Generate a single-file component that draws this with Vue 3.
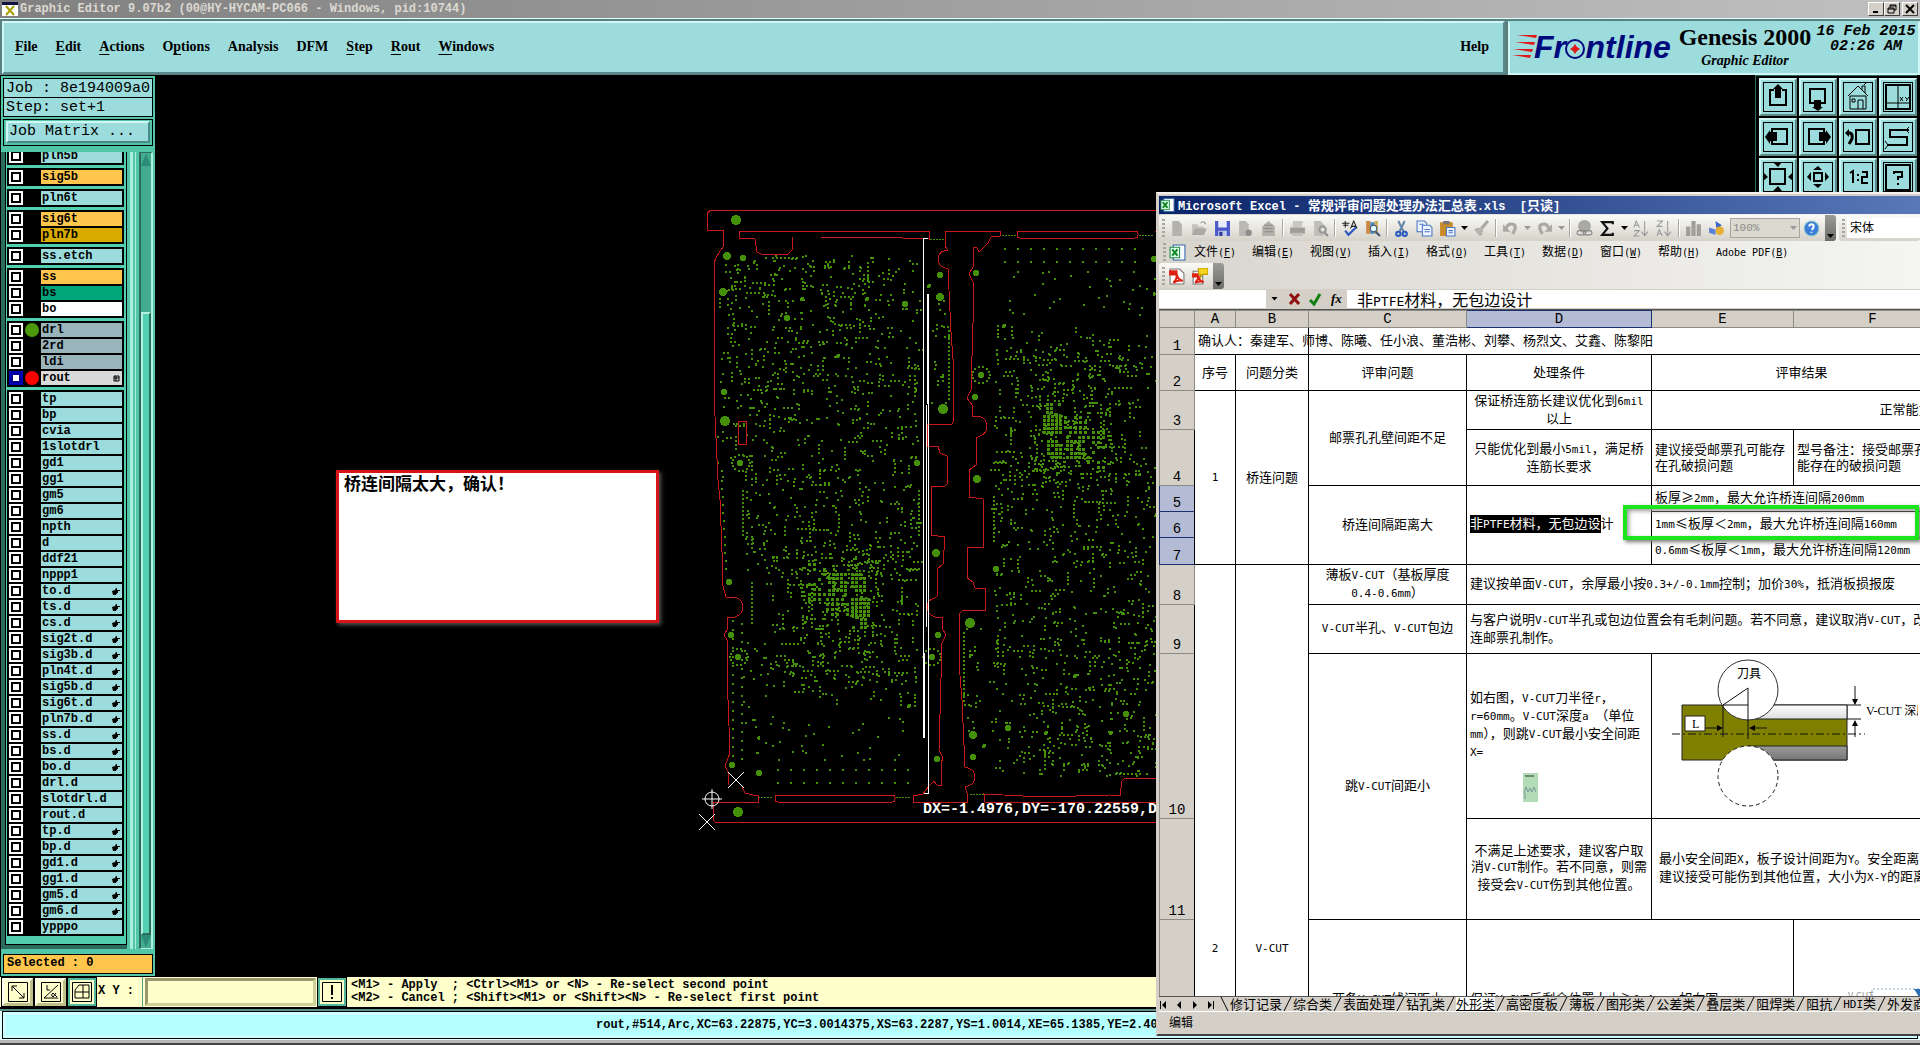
<script setup>
import { h } from 'vue'

// Mixed CJK / Latin text: Latin runs get half-width monospace glyphs.
const Txt = (props) =>
  h('span', { class: 'mix' },
    props.t.split(/([\x20-\x7e]+)/).filter(Boolean).map((s) =>
      /^[\x20-\x7e]/.test(s) ? h('span', { class: 'lat' }, s) : s))
Txt.props = ['t']

const menus = [['', 'F', 'ile'], ['', 'E', 'dit'], ['', 'A', 'ctions'], ['O', 'p', 'tions'], ['Anal', 'y', 'sis', 1], ['DFM', '', ''], ['', 'S', 'tep'], ['', 'R', 'out'], ['', 'W', 'indows']]

const L = (name, color = '', extra = {}) => ({ name, color, ...extra })
const hand = (s) => s.split(' ').map((n) => L(n, '', { hand: true }))
const plain = (s) => s.split(' ').map((n) => L(n))
const groups = [
  [L('pln5b')],
  [L('sig5b', 'orange')],
  [L('pln6t')],
  [L('sig6t', 'orange'), L('pln7b', 'gold')],
  [L('ss.etch')],
  [L('ss', 'orange'), L('bs', 'green'), L('bo', 'white')],
  [L('drl', 'slate', { dot: 'green' }), L('2rd', 'slate'), L('ldi', 'slate'), L('rout', 'grey', { dot: 'red', on: true })],
  [...plain('tp bp cvia 1slotdrl gd1 gg1 gm5 gm6 npth d ddf21 nppp1'),
    ...hand('to.d ts.d cs.d sig2t.d sig3b.d pln4t.d sig5b.d sig6t.d pln7b.d ss.d bs.d bo.d'),
    ...plain('drl.d slotdrl.d rout.d'), ...hand('tp.d bp.d gd1.d gg1.d gm5.d gm6.d'), L('ypppo')],
]

const tools = [
  ['Pan up', '<path d="M15 12h-4v15h16v-15h-4" class="k2"/><path d="M16 20v-9h-2l5-5 5 5h-2v9z"/>'],
  ['Pan down', '<path d="M15 25h-4v-14h15v14h-4" class="k2"/><path d="M15 22v7h-2l6 4 5-4h-2v-7z"/>'],
  ['Home', '<path d="M9 18L19 8l10 10M11 18v13h16v-13zM23 12v-4h3v7M13 21h3v3h-3zM19 31v-9h5v9" class="k1"/><path d="M25 7l2-2" class="k1"/>'],
  ['Windows', '<path d="M7 7h24v24h-24z" class="k2"/><path d="M19 7v24M7 25h24" class="k1"/><path d="M21 19l3 4M24 19l-3 4M26 19l2 2M30 19l-3 4" class="k1"/>'],
  ['Pan left', '<path d="M13 15v-4h15v15h-15v-4" class="k2"/><path d="M18 14v9h-7v3l-5-7 5-7v2z"/>'],
  ['Pan right', '<path d="M25 15v-4h-15v15h15v-4" class="k2"/><path d="M20 14v9h7v3l5-7-5-7v2z"/>'],
  ['Previous view', '<path d="M17 12h13v14h-13z" class="k2"/><path d="M8 15h3q3 1 2 6l-3 5" class="k3"/><path d="M10 11v8l-4-4z"/>'],
  ['Snake', '<path d="M30 12h-19v7h17v8h-20" class="k2"/><path d="M30 9l-3 3 3 3M6 23l3 4-3 4" class="k1"/>'],
  ['Zoom out', '<path d="M11 11h15v15h-15z" class="k2"/><path d="M14 4h9l-4 5zM14 33h9l-4-5zM4 14v9l5-4zM34 14v9l-5-4z"/>'],
  ['Zoom in', '<path d="M15 15h8v8h-8z" class="k2"/><path d="M14 12h9l-4-4zM14 26h9l-4 4zM12 14v9l-4-4zM26 14v9l4-4z"/>'],
  ['Scale one to two', '<path d="M11 15l3-2v12M18 17h2M18 22h2M23 14h5v5h-5v6h6" class="k2"/>'],
  ['Help', '<path d="M7 7h24v25h-24z" class="k2"/><path d="M15 16v-2h8v5h-4v3M19 25v2" class="k2"/>'],
]

const xl = {
  new: '<path d="M4 1h6l3 3v11h-9z" fill="#b4b2ac"/>',
  open: '<path d="M1 14V4h5l1 2h5v3" fill="#c4c1b8"/><path d="M1 14l3-6h11l-3 6z" fill="#aaa8a2"/><path d="M9 3q3-3 5 1" fill="none" stroke="#999"/>',
  save: '<path d="M1 1h14v14h-14z" fill="#4a58c8"/><path d="M4 1h8v6h-8z" fill="#e8ecff"/><path d="M4 10h8v5h-8z" fill="#c6ccf0"/><path d="M5 11h3v4h-3z" fill="#303c90"/>',
  perm: '<path d="M2 1h6l3 3v11h-9z" fill="#bab8b2"/><circle cx="11" cy="12" r="3" fill="#8f8d88"/>',
  mail: '<path d="M2 6l6-5 6 5v9h-12z" fill="#b3b0a9"/><path d="M4 5h8M4 8h8M4 11h8" stroke="#888"/>',
  print: '<path d="M4 1h9l-1 6h-9z" fill="#c9c7c1"/><path d="M1 7h14v6h-14z" fill="#9f9d98"/><path d="M3 12h10v3h-10z" fill="#c2c0ba"/>',
  view: '<path d="M2 1h6l3 3v11h-9z" fill="#c0beb8"/><circle cx="10" cy="9" r="3" fill="#ddd" stroke="#999" stroke-width="2"/><path d="M12 12l3 3" stroke="#888" stroke-width="2"/>',
  spell: '<path d="M1 3h7M4 1v6M2 5h5M9 8l3-7 3 7M10 6h4" stroke="#222" fill="none"/><path d="M4 10l3 4 7-7" stroke="#2b5bc0" stroke-width="2" fill="none"/>',
  book: '<path d="M2 1h4v12h-4z" fill="#c84"/><path d="M6 2h4v11h-4z" fill="#48b"/><path d="M10 1h3v12h-3z" fill="#ca5"/><circle cx="9" cy="8" r="3" fill="#dff" stroke="#457"/><path d="M11 11l4 4" stroke="#457" stroke-width="2"/>',
  cut: '<path d="M5 1l5 10M11 1l-5 10" stroke="#6688aa" stroke-width="2"/><circle cx="5" cy="13" r="2" fill="none" stroke="#2b5bc0" stroke-width="2"/><circle cx="11" cy="13" r="2" fill="none" stroke="#2b5bc0" stroke-width="2"/>',
  copy: '<path d="M1 1h7l2 2v8h-9z" fill="#eef3ff" stroke="#4a78c0"/><path d="M6 5h7l2 2v8h-9z" fill="#eef3ff" stroke="#4a78c0"/><path d="M8 9h5M8 11h5M3 4h4" stroke="#4a78c0"/>',
  paste: '<path d="M1 2h12v13h-12z" fill="#c98a28"/><path d="M4 1h6v3h-6z" fill="#777"/><path d="M7 7h8v8h-8z" fill="#eef3ff" stroke="#4a78c0"/><path d="M9 10h4M9 12h4" stroke="#4a78c0"/>',
  brush: '<path d="M14 1l-6 7M3 8l5 6" stroke="#aaa8a2" stroke-width="3"/><path d="M1 9l6-2 3 3-4 5z" fill="#b5b3ad"/>',
  undo: '<path d="M4 8q1-5 6-4t0 9" stroke="#aaa8a2" stroke-width="3" fill="none"/><path d="M1 4v7h7z" fill="#aaa8a2"/>',
  redo: '<path d="M12 8q-1-5-6-4t0 9" stroke="#aaa8a2" stroke-width="3" fill="none"/><path d="M15 4v7h-7z" fill="#aaa8a2"/>',
  link: '<circle cx="8" cy="6" r="6" fill="#aaa8a2"/><rect x="1" y="10" width="8" height="4" rx="2" fill="none" stroke="#888"/><rect x="7" y="10" width="8" height="4" rx="2" fill="none" stroke="#888"/>',
  sum: '<path d="M13 4v-2h-10l5 6-5 6h10v-2" fill="none" stroke="#111" stroke-width="2"/>',
  az: '<path d="M1 7l2-6 3 6M2 5h3M1 10h5l-5 5h5" fill="none" stroke="#999"/><path d="M11 1v13M8 11l3 4 3-4" fill="none" stroke="#999"/>',
  za: '<path d="M1 15l2-6 3 6M2 13h3M1 1h5l-5 5h5" fill="none" stroke="#999"/><path d="M11 1v13M8 11l3 4 3-4" fill="none" stroke="#999"/>',
  chart: '<path d="M1 6h4v9h-4zM6 1h4v14h-4zM11 4h4v11h-4z" fill="#a09e99"/>',
  draw: '<path d="M7 1l6 4-5 4z" fill="#3b66c8"/><circle cx="11" cy="10" r="4" fill="#e8b030"/><path d="M1 7l6 2v5l-6-2z" fill="#5a82d8"/>',
  help: '<circle cx="8" cy="8" r="7" fill="#3a7ed8" stroke="#9cc"/><path d="M6 6q0-2 2-2t2 2-2 3M8 11v1" fill="none" stroke="#fff" stroke-width="2"/>',
  pdf: '<path d="M2 1h9l4 4v10h-13z" fill="#fff" stroke="#777"/><path d="M1 2h8v5h-8z" fill="#d21"/><path d="M5 14q4-4 3-8 2 6 6 6-5-1-9 2z" fill="none" stroke="#d21" stroke-width="2"/>',
  pdf2: '<path d="M2 3h9v12h-9z" fill="#fff" stroke="#777"/><path d="M1 5h7v4h-7z" fill="#d21"/><path d="M4 14q3-3 3-6 1 5 5 5-4-1-8 1z" fill="none" stroke="#d21" stroke-width="2"/><path d="M7 0h9v6h-5l-2 3v-3h-2z" fill="#f5d31c" stroke="#b90"/>',
  sheet: '<path d="M4 1h11v14h-11z" fill="#fff" stroke="#36a"/><path d="M1 3h9v10h-9z" fill="#dfe" stroke="#284"/><path d="M3 5l5 6M8 5l-5 6" stroke="#182" stroke-width="2"/>',
}
const bar = ['new', 'open', 'save', 'perm', 'mail', '|', 'print', 'view', '|', 'spell', 'book', '|', 'cut', 'copy', 'paste', 'v', 'brush', '|', 'undo', 'w', 'redo', 'w', '|', 'link', 'sum', 'v', 'az', 'za', '|', 'chart', 'draw']
const xmenus = [['文件', 'F'], ['编辑', 'E'], ['视图', 'V'], ['插入', 'I'], ['格式', 'O'], ['工具', 'T'], ['数据', 'D'], ['窗口', 'W'], ['帮助', 'H'], ['Adobe PDF', 'B']]
const tabs = ['修订记录', '综合类', '表面处理', '钻孔类', '外形类', '高密度板', '薄板', '图形类', '公差类', '叠层类', '阻焊类', '阻抗', 'HDI类', '外发商']

// c: text, k: class, cs / rs: spans
const rows = [
  { n: 1, h: 27, cells: [{ c: '确认人：秦建军、师博、陈曦、任小浪、董浩彬、刘攀、杨烈文、艾鑫、陈黎阳', cs: 2, k: 'l spill' }, { c: '', cs: 5 }] },
  { n: 2, h: 36, cells: [{ c: '序号' }, { c: '问题分类' }, { c: '评审问题' }, { c: '处理条件' }, { c: '评审结果', cs: 2 }, { c: '' }] },
  { n: 3, h: 39, cells: [{ c: '1', rs: 5 }, { c: '桥连问题', rs: 5 }, { c: '邮票孔孔壁间距不足', rs: 2 }, { c: '保证桥连筋长建议优化到6mil\n以上' }, { c: '正常能力', cs: 3 }] },
  { n: 4, h: 56, cells: [{ c: '只能优化到最小5mil，满足桥\n连筋长要求' }, { c: '建议接受邮票孔可能存\n在孔破损问题', k: 'l' }, { c: '型号备注：接受邮票孔可\n能存在的破损问题', k: 'l', cs: 2 }] },
  { n: 5, h: 26, sel: 1, cells: [{ c: '桥连间隔距离大', rs: 3 }, { edit: 1, rs: 3, k: 'l active' }, { c: '板厚≥2mm，最大允许桥连间隔200mm', k: 'l', cs: 3 }] },
  { n: 6, h: 26, sel: 1, cells: [{ c: '1mm≤板厚＜2mm，最大允许桥连间隔160mm', k: 'l', cs: 3 }] },
  { n: 7, h: 27, sel: 1, cells: [{ c: '0.6mm≤板厚＜1mm，最大允许桥连间隔120mm', k: 'l', cs: 3 }] },
  { n: 8, h: 40, cells: [{ c: '2', rs: 6 }, { c: 'V-CUT', rs: 6 }, { c: '薄板V-CUT（基板厚度\n0.4-0.6mm）' }, { c: '建议按单面V-CUT，余厚最小按0.3+/-0.1mm控制；加价30%，抵消板损报废', k: 'l', cs: 4 }] },
  { n: 9, h: 49, cells: [{ c: 'V-CUT半孔、V-CUT包边' }, { c: '与客户说明V-CUT半孔或包边位置会有毛刺问题。若不同意，建议取消V-CUT，改\n连邮票孔制作。', k: 'l', cs: 4 }] },
  { n: 10, h: 165, cells: [{ c: '跳V-CUT间距小', rs: 2 }, { c: '如右图，V-CUT刀半径r，\nr=60mm。V-CUT深度a （单位\nmm），则跳V-CUT最小安全间距\nX=', k: 'l', formula: 1 }, { fig: 1, cs: 3, k: 'fig' }] },
  { n: 11, h: 101, cells: [{ c: '不满足上述要求，建议客户取\n消V-CUT制作。若不同意，则需\n接受会V-CUT伤到其他位置。' }, { c: '最小安全间距X，板子设计间距为Y。安全距离不足，\n建议接受可能伤到其他位置，大小为X-Y的距离', k: 'l far', cs: 3 }] },
  { n: 12, h: 160, cells: [{ c: '两条V-CUT线间距小' }, { c: '保证V-CUT后剩余位置大小≥0.4mm，如右图', k: 'l', cs: 2 }, { fig2: 1, cs: 2, k: 'fig' }] },
  { n: 13, h: 254, cells: [{ c: '' }, { c: '', cs: 4 }] },
]

// Drill hits of one board; the second board is the same one turned by 180 degrees.
let seed = 20150216
const rnd = () => ((seed = (seed * 1664525 + 1013904223) >>> 0) / 4294967296)
const dots = []
const dot = (x, y, w = 2, hh = 2) => dots.push([Math.round(x), Math.round(y), w, hh])
const scatter = (n, x0, y0, x1, y1, run = 0.25) => {
  for (let i = 0; i < n; i++) {
    let x = x0 + rnd() * (x1 - x0)
    let y = y0 + rnd() * (y1 - y0)
    dot(x, y)
    const vert = rnd() < 0.5
    while (rnd() < run) {
      if (vert) y += 4
      else x += 4
      dot(x, y)
    }
  }
}
scatter(340, 725, 254, 920, 375)
scatter(200, 735, 375, 918, 460)
scatter(250, 745, 460, 918, 570)
scatter(230, 765, 545, 918, 685, 0.35)
scatter(90, 800, 555, 885, 660, 0.4)
scatter(50, 765, 660, 918, 700)
scatter(34, 765, 705, 905, 760, 0)
scatter(26, 716, 262, 735, 480)
scatter(20, 931, 300, 945, 415)
scatter(24, 742, 640, 765, 770, 0)
const block = (x0, y0, x1, y1, s, p) => {
  for (let y = y0; y < y1; y += s) for (let x = x0; x < x1; x += s) if (rnd() < p) dot(x, y, 3, 3)
}
block(828, 573, 848, 596, 4, 0.85)
block(851, 573, 867, 590, 4, 0.8)
block(851, 598, 871, 618, 4, 0.95)
block(808, 563, 826, 600, 5, 0.6)
block(852, 618, 870, 630, 4, 0.5)
block(826, 598, 850, 616, 5, 0.5)
for (let x = 777; x < 910; x += 13) { dot(x, 769); dot(x, 782) }
for (let y = 582; y < 625; y += 4) dot(751, y)
for (let y = 490; y < 536; y += 4) { dot(742, y); dot(918, y) }
for (let y = 330; y < 400; y += 4) if (y % 12) dot(948, y)
for (let y = 480; y < 572; y += 8) dot(721 + (y - 480) / 22, y)
for (let y = 620; y < 760; y += 9) { dot(732, y); dot(741, y + 3) }
for (let x = 772; x < 800; x += 4) dot(x, 257)
const ring = (cx, cy) => {
  for (let a = 0; a < 14; a++) dot(cx + 9 * Math.cos(a * 0.449), cy + 8 * Math.sin(a * 0.449))
}
ring(740, 462); ring(738, 656); ring(931, 656)
const pads = [[727, 256, 4], [743, 258, 3], [723, 292, 4], [787, 318, 3], [905, 304, 3], [802, 299, 2], [867, 299, 2], [940, 275, 3], [929, 286, 2], [940, 297, 4], [725, 421, 5], [724, 392, 3], [740, 463, 3], [917, 463, 3], [943, 409, 5], [838, 356, 2], [729, 582, 3], [731, 635, 3], [738, 657, 3], [932, 657, 3], [936, 553, 4], [938, 635, 3], [732, 765, 3], [759, 773, 3], [909, 706, 2], [937, 759, 3]]
const rect = ([x, y, w, q]) => `M${x} ${y}h${w}v${q}h-${w}z`
const near = dots.map(rect).join('')
const far = dots.map(([x, y, w, q]) => rect([1913 - x - w, 1032 - y - q, w, q])).join('')
const links = [[1002, 235], [1139, 235], [930, 239], [758, 797], [896, 797], [970, 794]]
  .map(([x, y]) => [0, 3, 6, 9, 12].map((d) => rect([x + d, y, 2, 1])).join('')).join('')
</script>

<template>
  <div class="screen">
    <header class="titlebar">
      <svg class="xicon" viewBox="0 0 16 14" aria-hidden="true"><path d="M0 0h16v14H0z" fill="#fff" /><path d="M0 0h16v3H0z" fill="#114" /><path d="M4 4l8 9M12 4l-8 9" stroke="#a8a000" stroke-width="2" /></svg>
      <span class="wtitle">Graphic Editor 9.07b2 (00@HY-HYCAM-PC066 - Windows, pid:10744)</span>
      <div class="wbtns">
        <button aria-label="Minimize"><svg viewBox="0 0 12 10"><path d="M3 8h5" class="k2" /></svg></button>
        <button aria-label="Restore"><svg viewBox="0 0 12 10"><path d="M4 4v-3h6v5h-2M2 4h6v5h-6zM2 5h6M4 2h6" class="k1" /></svg></button>
        <button class="close" aria-label="Close"><svg viewBox="0 0 12 10"><path d="M2 1l8 8M10 1l-8 8" class="k2" /></svg></button>
      </div>
    </header>

    <div class="head">
      <nav class="menubar">
        <a v-for="m in menus" :key="m.join('')" href="#">{{ m[0] }}<u v-if="!m[3]">{{ m[1] }}</u><template v-else>{{ m[1] }}</template>{{ m[2] }}</a>
        <a href="#" class="helplink">Help</a>
      </nav>
      <div class="brand">
        <svg class="logo" viewBox="0 0 164 40" role="img" aria-label="Frontline">
          <path d="M5 8h20l-1 3zM3 15h20l-1 3zM1 22h20l-1 3zM0 28h19l-1 3z" fill="#e01818" />
          <text x="22" y="31">Fr<tspan fill="none">o</tspan>ntline</text>
          <circle cx="63" cy="22" r="9" fill="none" stroke="#000a7c" stroke-width="2" />
          <path d="M63 17l2 3 3 2-3 2-2 3-2-3-3-2 3-2z" fill="#e01818" />
        </svg>
        <div class="product"><strong>Genesis 2000</strong><em>Graphic Editor</em></div>
        <div class="clock">16 Feb 2015<br>02:26 AM</div>
      </div>
    </div>

    <main class="work">
      <aside class="side">
        <div class="jobbox">Job : 8e194009a0</div>
        <div class="jobbox">Step: set+1</div>
        <div class="matrix"><button>Job Matrix ...</button></div>
        <div class="listwrap">
          <div class="list">
            <div v-for="(g, gi) in groups" :key="gi" class="group">
              <label v-for="r in g" :key="r.name" class="row">
                <input type="checkbox" :class="{ on: r.on }">
                <i class="mark" :class="r.dot"></i>
                <span class="name" :class="r.color">{{ r.name }}
                  <svg v-if="r.hand" viewBox="0 0 8 7" aria-hidden="true"><path d="M0 3l3-1 1-2h1v2h3v1h-2v2h-1v1h-1v1h-3z" /></svg>
                  <svg v-if="r.on" viewBox="0 0 8 7" aria-hidden="true"><path d="M2 1h5v5h-5zM4 1v5M2 3h5" class="k1" /></svg>
                </span>
              </label>
            </div>
          </div>
          <div class="rail"></div>
          <div class="scroll"><i class="up"></i><i class="track"></i><i class="thumb"></i><i class="down"></i></div>
        </div>
        <div class="selected">Selected : 0</div>
      </aside>

      <svg class="board" viewBox="690 200 470 640" shape-rendering="crispEdges" aria-label="Board artwork">
        <g fill="#459009">
          <path :d="near" /><path :d="far" /><path :d="links" />
          <circle v-for="p in pads" :key="'a' + p" :cx="p[0]" :cy="p[1]" :r="p[2]" />
          <circle v-for="p in pads" :key="'b' + p" :cx="1913 - p[0]" :cy="1032 - p[1]" :r="p[2]" />
          <circle cx="736" cy="220" r="5" /><circle cx="738" cy="812" r="5" />
        </g>
        <g fill="none" stroke="#c81818">
          <path d="M1160 210.500H710l-3 3V230h16l1 16q-10 12-10 20V395l4 85 2 20 3 77-1 5 4 15h9q8 3 8 10t-8 10h-8v13l-3 5 3 5v33l3 80-5 13 3 6v13M742 787l3 6 8 2h5v7h-45v18l2 2H1160" />
          <path d="M739 231h190v8l-26-1-83-1h-27l-1 13-4 4h-27l-4-2-2-13-16-1z" />
          <path d="M945 231h55v5l-9 1-3 6-6 6-3 3-2-4-4-1v20l-4 7 4 8v41l-2 67-4 8 5 7v11h6q9 2 9 10t-7 10l-4 2v27l-7 5v27l14 2v48h-16v31l6 4 2 6h10v22h-22l-4 4v49l3 37 3 67q10 2 10 10t-10 10l2 6v9h-54v-6l10-2 5-7 6-6 3 4h4v-22l2-5-4-8 3-107 4-8-4-7 1-11h-8q-8-3-8-10t8-9l2-2v-27l6-5 2-27-14-2v-49h14l2-2v-28l-7-3-2-7h-11v-22h25l1-2v-63l-2-27-3-63q-10-2-10-10t10-9l-3-4z" />
          <rect x="1017" y="231" width="121" height="7" rx="3" /><rect x="775" y="795" width="120" height="7" rx="3" /><rect x="738" y="421" width="8" height="23" />
          <path d="M1160 802H985l-1-8 58 3 68-2 10 1 2-15 3-3h35M1155 231h5" />
        </g>
        <path d="M928 238h-4.500V738M928.500 294V793h-5M926.500 405V627" fill="none" stroke="#fff" />
        <path d="M928 294v110M924 653v85" stroke="#fff" stroke-width="2" />
        <g fill="none" stroke="#fff" shape-rendering="auto"><circle cx="712" cy="799" r="7" /><path d="M702 799h20M712 789v20M728 772l16 16M744 772l-16 16M699 814l16 16M715 814l-16 16" /></g>
        <text x="923" y="813">DX=-1.4976,DY=-170.22559,D</text>
      </svg>

      <div class="note">桥连间隔太大，确认！</div>

      <div class="tools">
        <button v-for="t in tools" :key="t[0]" :aria-label="t[0]"><svg viewBox="0 0 38 38" v-html="t[1]"></svg></button>
      </div>
    </main>

    <div class="cmd">
      <button aria-label="Diagonal"><svg viewBox="0 0 20 20"><path d="M.5.5h19v19H.5zM4 4l12 12M4 9V4h5M11 16h5v-5" class="k1" /></svg></button>
      <button aria-label="Angle"><svg viewBox="0 0 20 20"><path d="M.5.5h19v19H.5zM17 3L3 16h14M6 3v5h3M12 11q-3 2 0 4l3-4M12 11l4 4" class="k1" /></svg></button>
      <button class="lit" aria-label="Grid"><svg viewBox="0 0 20 20"><path d="M.5.5h19v19H.5zM7 3h10v13H3V8zM3 10h14M11 3v13" class="k1" /></svg></button>
      <label for="xy">X Y :</label>
      <input id="xy" type="text">
      <button class="lit bang" aria-label="Alert"><svg viewBox="0 0 20 20"><path d="M.5.5h19v19H.5z" class="k1" /><path d="M10 3v10M10 15v2" class="k2" /></svg></button>
      <p>&lt;M1&gt; - Apply&nbsp; ; &lt;Ctrl&gt;&lt;M1&gt; or &lt;N&gt; - Re-select second point<br>&lt;M2&gt; - Cancel ; &lt;Shift&gt;&lt;M1&gt; or &lt;Shift&gt;&lt;N&gt; - Re-select first point</p>
    </div>
    <footer class="status"><div>rout,#514,Arc,XC=63.22875,YC=3.0014375,XS=63.2287,YS=1.0014,XE=65.1385,YE=2.4073</div></footer>

    <section class="excel">
      <div class="xtitle"><svg viewBox="0 0 16 16" v-html="xl.sheet"></svg><Txt t="Microsoft Excel - 常规评审问题处理办法汇总表.xls  [只读]" /></div>
      <div class="dock">
        <div class="bars">
          <div class="bar">
            <i class="grip"></i>
            <template v-for="(b, i) in bar" :key="i">
              <i v-if="b === '|'" class="sep"></i>
              <i v-else-if="b === 'v' || b === 'w'" class="drop" :class="{ dim: b === 'w' }"></i>
              <button v-else :aria-label="b"><svg viewBox="0 0 16 16" v-html="xl[b]"></svg></button>
            </template>
            <div class="zoom">100%<i class="drop dim"></i></div>
            <button aria-label="help"><svg viewBox="0 0 16 16" v-html="xl.help"></svg></button>
            <i class="cap"></i>
          </div>
          <div class="bar rest"><i class="grip"></i><div class="font">宋体</div></div>
        </div>
        <nav class="xmenu">
          <i class="grip"></i><svg viewBox="0 0 16 16" v-html="xl.sheet"></svg>
          <a v-for="m in xmenus" :key="m[1]" href="#"><Txt :t="m[0]" /><span class="lat">(<u>{{ m[1] }}</u>)</span></a>
        </nav>
        <div class="bars">
          <div class="bar"><i class="grip"></i><button aria-label="pdf"><svg viewBox="0 0 16 16" v-html="xl.pdf"></svg></button><button aria-label="pdf mail"><svg viewBox="0 0 16 16" v-html="xl.pdf2"></svg></button><i class="cap"></i></div>
        </div>
      </div>
      <div class="fx">
        <input aria-label="Name box" type="text">
        <i class="drop"></i>
        <svg class="ops" viewBox="0 0 62 18" aria-hidden="true"><path d="M6 4l9 10M15 4l-9 10" stroke="#901010" stroke-width="3" /><path d="M26 10l4 4 6-10" fill="none" stroke="#108010" stroke-width="3" /><text x="47" y="13">fx</text></svg>
        <div class="ftext"><Txt t="非PTFE材料，无包边设计" /></div>
      </div>
      <div class="sheet">
        <table>
          <colgroup><col class="c0"><col class="ca"><col class="cb"><col class="cc"><col class="cd"><col class="ce"><col class="cf"><col class="cg"></colgroup>
          <thead><tr><th></th><th v-for="c in 'ABCDEFG'" :key="c" :class="{ hot: c === 'D' }">{{ c }}</th></tr></thead>
          <tbody>
            <tr v-for="r in rows" :key="r.n" :style="{ height: r.h + 'px' }">
              <th :class="{ hot: r.sel }">{{ r.n > 11 ? '' : r.n }}</th>
              <td v-for="(c, i) in r.cells" :key="i" :class="c.k" :colspan="c.cs" :rowspan="c.rs">
                <template v-if="c.edit"><span class="inv"><Txt t="非PTFE材料，无包边设" /></span>计</template>
                <svg v-else-if="c.fig" class="vcut" viewBox="1653 655 266 163">
                  <defs><linearGradient id="g1" x2="0" y2="1"><stop offset="0" stop-color="#fff" /><stop offset="1" stop-color="#777" /></linearGradient></defs>
                  <path d="M1683 706h165v55h-165z" fill="#808000" stroke="#222" />
                  <path d="M1749 706h99v14h-99zM1749 747h99v14h-99z" fill="url(#g1)" stroke="#222" />
                  <circle cx="1749" cy="691" r="30" fill="#fff" stroke="#333" />
                  <circle cx="1749" cy="777" r="30" fill="#fff" stroke="#222" stroke-dasharray="4 3" />
                  <path d="M1724 738v-32l25-17v51M1724 706h25M1848 706h14M1848 720h14M1856 687v16M1856 738v-14M1706 729h14M1768 729h-14" fill="none" stroke="#111" />
                  <path d="M1853 700h6l-3 6zM1853 727h6l-3-6zM1718 726v6l6-3zM1756 726v6l-6-3z" />
                  <path d="M1673 735h193" stroke="#111" stroke-dasharray="8 3 2 3" />
                  <path d="M1686 717h20v15h-20z" fill="#fff" stroke="#222" />
                  <text x="1693" y="729">L</text><text x="1738" y="679">刀具</text><text x="1867" y="716">V-CUT 深度</text>
                </svg>
                <svg v-else-if="c.fig2" class="tri" viewBox="0 0 90 14"><text x="0" y="13">V-CUT</text><path d="M24 14V3h50" fill="none" stroke="#8ab" stroke-dasharray="2 2" /><path d="M66 3h24v11h-17z" fill="#2f6fb5" /></svg>
                <template v-else>
                  <Txt :t="c.c" />
                  <svg v-if="c.formula" class="eq" viewBox="0 0 15 29"><path d="M0 0h15v29H0z" fill="#b2dcb6" /><path d="M2 3h9" stroke="#333" /><path d="M1 20l2-6 2 5 2-4 2 4 2-5 2 5M2 20v6" fill="none" stroke="#799" /></svg>
                </template>
              </td>
            </tr>
          </tbody>
        </table>
        <div class="callout"></div>
      </div>
      <div class="tabs">
        <svg class="nav" viewBox="0 0 60 15" aria-hidden="true"><path d="M3 8l4-4v8zM18 8l4-4v8zM38 8l-4-4v8zM53 8l-4-4v8z" /><path d="M1 4h1v8h-1zM54 4h1v8h-1z" /></svg>
        <a v-for="(t, i) in tabs" :key="t" href="#" :class="{ cur: i === 4 }"><svg viewBox="0 0 11 15" aria-hidden="true"><path :d="i === 0 ? 'M2 0l7 14' : 'M2 14l7-14'" class="k1" /></svg><Txt :t="t" /></a>
      </div>
      <div class="xstatus">编辑</div>
    </section>
  </div>
</template>

<style>
body { margin: 0; background: #000; }
.mix { white-space: pre; }
.lat { font-family: "DejaVu Sans Mono", monospace; font-size: 11px; }
.k1, .k2, .k3 { fill: none; stroke: #000; stroke-width: 1; }
.k2 { stroke-width: 2; }
.k3 { stroke-width: 3; }
</style>

<style scoped>
* { box-sizing: border-box; }
.screen { position: relative; display: flex; flex-direction: column; height: 100vh; overflow: hidden; background: #000; color: #000; font-family: "Liberation Mono", monospace; }
button { padding: 0; border: 0; background: none; font: inherit; color: inherit; display: grid; place-items: center; }
a { color: inherit; text-decoration: none; }
svg { display: block; }

.titlebar { display: flex; align-items: center; height: 18px; padding: 0 2px; gap: 2px; background: linear-gradient(90deg, #808080, #c0c0c0); color: #dcd9d2; }
.xicon { width: 16px; height: 14px; }
.wtitle { flex: 1; font-size: 12px; font-weight: bold; }
.wbtns { display: flex; }
.wbtns button { width: 16px; height: 14px; background: #d4d0c8; border: 1px solid; border-color: #fff #404040 #404040 #fff; }
.wbtns svg { width: 12px; height: 10px; }
.wbtns .close { margin-left: 2px; }

.head { display: flex; height: 57px; gap: 1px; border-top: 1px solid #dff; background: #5a8080; padding-top: 2px; }
.menubar, .brand { background: #9cdcdc; border: 2px solid; border-color: #d0f6f6 #5a8a8a #5a8a8a #d0f6f6; }
.menubar { flex: 1; margin: 0 0 1px 2px; display: flex; align-items: center; gap: 18px; padding: 0 14px 1px 11px; font: bold 14px "Liberation Serif", serif; }
.menubar u { text-underline-offset: 3px; }
.helplink { margin-left: auto; }
.brand { width: 412px; margin-left: 2px; display: flex; padding: 0 0 0 2px; border-color: #9cdcdc #d0f6f6 #d0f6f6 #d0f6f6; }
.logo { width: 164px; height: 40px; margin-top: 4px; }
.logo text { font: italic bold 32px "Liberation Sans", sans-serif; fill: #000a7c; }
.product { width: 138px; display: flex; flex-direction: column; align-items: center; font-family: "Liberation Serif", serif; white-space: nowrap; }
.product strong { font-size: 24px; line-height: 28px; }
.product em { font-size: 14px; font-weight: bold; line-height: 20px; }
.clock { flex: 1; text-align: center; font-style: italic; font-weight: bold; font-size: 15px; line-height: 15px; padding-top: 1px; white-space: nowrap; }

.work { position: relative; flex: 1; min-height: 0; display: flex; justify-content: space-between; }
.side { width: 154px; margin: 1px 0 0 1px; padding: 2px; display: flex; flex-direction: column; background: #52c6a6; }
.jobbox { height: 20px; margin-bottom: -1px; border: 1px solid #000; background: #9cdcdc; font-size: 15px; line-height: 19px; padding-left: 2px; white-space: nowrap; }
.matrix { margin-top: 3px; padding: 1px 2px 2px; border: 1px solid #000; }
.matrix button { display: block; width: 100%; height: 22px; text-align: left; padding-left: 1px; font-size: 15px; line-height: 18px; background: #9cdcdc; border: 2px solid; border-color: #d0f6f6 #4a8a8a #4a8a8a #d0f6f6; }
.listwrap { flex: 1; min-height: 0; margin: 6px 0 5px -2px; padding-left: 4px; display: flex; background: #2c6c5c; }
.list { width: 122px; overflow: hidden; display: flex; flex-direction: column; justify-content: flex-end; gap: 3px; background: #52cfb0; border: 1px solid #000; border-width: 0 1px 1px; padding: 0 1px 8px; margin-bottom: 4px; }
.group { flex: none; width: 117px; padding: 2px 2px 0; background: #000; }
.row { display: flex; height: 16px; }
.row input { appearance: none; width: 14px; height: 14px; margin: 0; background: #fff; border: 2px solid #fff; box-shadow: inset 0 0 0 2px #000; }
.row input.on { border-color: #0000b8; box-shadow: inset 0 0 0 2px #000090; }
.mark { width: 14px; height: 14px; margin: 0 2px; border-radius: 50%; }
.mark.green { background: #4a9a0a; }
.mark.red { background: #f00; }
.name { flex: 1; height: 14px; display: flex; justify-content: space-between; align-items: center; padding: 0 2px 0 1px; background: #9cdcdc; font-size: 12px; line-height: 14px; font-weight: bold; }
.name svg { width: 8px; height: 7px; }
.orange { background: #ffc64e; }
.gold { background: #d9aa00; }
.green.name { background: #00a57a; }
.white { background: #fff; }
.slate { background: #9ab4bc; }
.grey { background: #dadada; }
.rail { width: 12px; background: linear-gradient(90deg, #52c6a6 3px, #a8f0dc 3px 6px, #52c6a6 6px 8px, #a8f0dc 8px 9px, #52c6a6 9px); }
.scroll { flex: 1; display: flex; flex-direction: column; background: #42ab90; border: 1px solid; border-color: #2c6c5c #b0f0dc #b0f0dc #2c6c5c; border-width: 1px 2px; }
.up, .down { height: 13px; background: #2c8c78; clip-path: polygon(50% 5%, 100% 100%, 0 100%); }
.down { clip-path: polygon(0 0, 100% 0, 50% 95%); }
.track { flex: 0 0 146px; }
.thumb { flex: 1; background: #52d0b2; border: 2px solid; border-color: #b0f0dc #2c6c5c #2c6c5c #b0f0dc; }
.selected { height: 20px; border: 1px solid #000; background: #ffc64e; font-size: 12px; font-weight: bold; line-height: 17px; padding-left: 3px; }
.board { position: absolute; left: 690px; top: 125px; width: 470px; height: 640px; }
.board text { font: bold 15px "Liberation Mono", monospace; fill: #fff; }
.note { position: absolute; left: 336px; top: 395px; width: 323px; height: 153px; border: 3px solid #d81418; background: #fff; padding: 0 5px; font: bold 17px/20px "Noto Sans CJK SC", sans-serif; box-shadow: 2px 2px 4px #555; }
.tools { align-self: flex-start; margin: 0 3px 0 0; padding: 2px 0 0 3px; border: 1px solid #2c6c5c; border-width: 1px 0 0 1px; display: grid; grid-template-columns: repeat(4, 38px); gap: 2px; }
.tools button { width: 38px; height: 38px; background: #9cdcdc; border: 2px solid; border-color: #d0f6f6 #5a8a8a #5a8a8a #d0f6f6; outline: 1px solid #000; outline-offset: -5px; }
.tools svg { width: 38px; height: 38px; margin: -2px; }

.cmd { display: flex; align-items: stretch; height: 33px; background: #ffffcc; border-top: 1px solid #000; border-bottom: 2px solid #000; font-size: 12px; font-weight: bold; }
.cmd button { width: 31px; margin: 1px 0 1px 2px; border: 3px solid; border-color: #ffffe8 #c0c08a #c0c08a #ffffe8; outline: 1px solid #000; }
.cmd button svg { width: 20px; height: 20px; }
.cmd .lit { width: 28px; border: 2px solid #52b898; }
.cmd .bang { margin-left: 0; }
.cmd label { width: 47px; padding-left: 2px; line-height: 29px; border-right: 1px solid #5a9a8a; }
.cmd input { width: 171px; margin: 1px 2px; border: 3px solid; border-color: #98986c #d0d09c #d0d09c #98986c; background: #ffffcc; }
.cmd p { margin: 2px 0 0; padding-left: 5px; line-height: 13px; white-space: nowrap; }
.status { height: 36px; padding: 2px 2px 5px; background: linear-gradient(#5f9090 2px, #e0ffff 2px 31px, #b8b8b8 31px 34px, #444 34px); }
.status div { height: 28px; border: 1px solid #000; box-shadow: inset 0 0 0 3px #ccffff; background: #b4ffff; padding-left: 593px; font-size: 12px; font-weight: bold; line-height: 26px; white-space: nowrap; }

.excel { position: absolute; left: 1156px; right: 0; top: 192px; bottom: 9px; display: flex; flex-direction: column; overflow: hidden; background: #d4d0c8; border: 2px solid; border-color: #f4f2ee #404040 #404040 #d4d0c8; border-right: 0; padding: 2px 0 0 1px; font: 13px/16px "Noto Sans CJK SC", sans-serif; }
.xtitle { height: 18px; flex: none; display: flex; align-items: center; gap: 3px; padding-left: 1px; background: linear-gradient(90deg, #0a246a, #5878b8); color: #fff; font-weight: bold; }
.xtitle svg { width: 15px; height: 16px; }
.xtitle :deep(.lat) { font: bold 12px "Liberation Mono", monospace; }
.dock { flex: none; padding-top: 1px; background: linear-gradient(90deg, #d8d5cd, #f5f5f3); }
.bars { display: flex; height: 26px; gap: 3px; }
.bar { display: flex; align-items: center; background: linear-gradient(#fafaf7, #d5d2c9); border-radius: 3px; overflow: hidden; padding-left: 3px; flex: none; }
.rest { flex: 1; }
.bar button { width: 23px; height: 24px; }
.bar button svg { width: 17px; height: 17px; }
.grip { width: 3px; height: 18px; flex: none; background: repeating-linear-gradient(#a8a59c 0 2px, transparent 2px 4px); }
.sep { width: 6px; height: 18px; background: linear-gradient(90deg, transparent 2px, #aaa79e 2px 3px, #fff 3px 4px, transparent 4px); }
.drop { width: 11px; height: 4px; background: #000; clip-path: polygon(18% 0, 82% 0, 50% 100%); }
.dim { background: #999; }
.zoom { width: 70px; height: 20px; margin-left: 2px; padding-left: 2px; border: 1px solid #a8a59c; display: flex; align-items: center; justify-content: space-between; color: #8a8a86; font: 11px "Liberation Mono", monospace; background: #dcd9d1; }
.cap { width: 11px; height: 26px; margin-left: 2px; background: linear-gradient(#9a9a96, #6c6c68); display: grid; }
.cap::after { content: ""; align-self: end; justify-self: center; width: 7px; height: 4px; margin-bottom: 3px; background: #000; clip-path: polygon(0 0, 100% 0, 50% 100%); }
.font { flex: 1; height: 20px; background: #fff; padding-left: 3px; font-size: 12px; line-height: 18px; margin-left: 2px; }
.xmenu { display: flex; align-items: center; height: 22px; padding-left: 4px; font-size: 12px; }
.xmenu svg { width: 17px; height: 17px; margin: 0 8px 0 3px; }
.xmenu a { width: 58px; white-space: nowrap; }
.xmenu a:last-child { width: auto; }
.xmenu .lat, .xmenu :deep(.lat) { font-size: 10px; }
.fx { flex: none; display: flex; align-items: center; height: 20px; border-bottom: 1px solid #d4d0c8; }
.fx input { width: 107px; height: 18px; border: 0; background: #fff; padding: 0; margin-right: 3px; }
.ops { width: 62px; height: 18px; margin-left: 4px; }
.ops text { font: italic bold 13px "Liberation Serif", serif; }
.ftext { flex: 1; height: 18px; margin-left: 1px; padding-left: 10px; background: #fff; font-size: 16px; line-height: 18px; }
.ftext :deep(.lat) { font-size: 13px; }
.sheet { position: relative; flex: 1; min-height: 0; overflow: hidden; background: #fff; border-top: 1px solid #555; }
table { table-layout: fixed; border-collapse: collapse; width: 1000px; }
.c0 { width: 35px; } .ca { width: 41px; } .cb { width: 73px; } .cc { width: 158px; } .cd { width: 185px; } .ce { width: 142px; } .cf { width: 158px; } .cg { width: 208px; }
th { padding: 0; background: #d4d0c8; border: 1px solid #8c8a84; font: 14px/16px "Liberation Mono", monospace; vertical-align: bottom; }
thead th { height: 17px; }
th.hot { background: #b4bbd4; border-color: #1c3070; }
td { padding: 0 2px 2px; border: 1px solid #000; text-align: center; vertical-align: middle; line-height: 16px; }
tbody tr:first-child td { border-top-color: #8c8a84; }
.l { text-align: left; padding-left: 3px; }
.far { padding-left: 7px; }
.spill { white-space: nowrap; }
.inv { display: inline-block; background: #000; color: #fff; }
.fig { padding: 0; vertical-align: top; }
.vcut { width: 266px; height: 163px; }
.vcut text { font: 12px "Liberation Serif", "Noto Sans CJK SC", serif; }
.tri { width: 90px; height: 14px; margin: 66px 0 0 54px; }
.tri text { font: 9px "Noto Sans CJK SC", sans-serif; fill: #999; }
.eq { width: 15px; height: 29px; margin: 12px 0 -20px 53px; }
.callout { position: absolute; left: 464px; right: 1px; top: 195px; height: 35px; border: 4px solid #1de51d; box-shadow: 2px 2px 4px #777, inset 2px 2px 4px #999; }
.tabs { flex: none; height: 16px; display: flex; align-items: center; border-top: 1px solid #555; border-bottom: 1px solid #fff; overflow: hidden; white-space: nowrap; line-height: 14px; }
.nav { width: 60px; height: 15px; flex: none; }
.tabs a { display: flex; flex: none; }
.tabs a svg { width: 11px; height: 15px; }
.cur :deep(.mix) { background: #fff; text-decoration: underline; }
.xstatus { flex: none; height: 22px; padding-left: 10px; font-size: 12px; line-height: 20px; }
</style>
